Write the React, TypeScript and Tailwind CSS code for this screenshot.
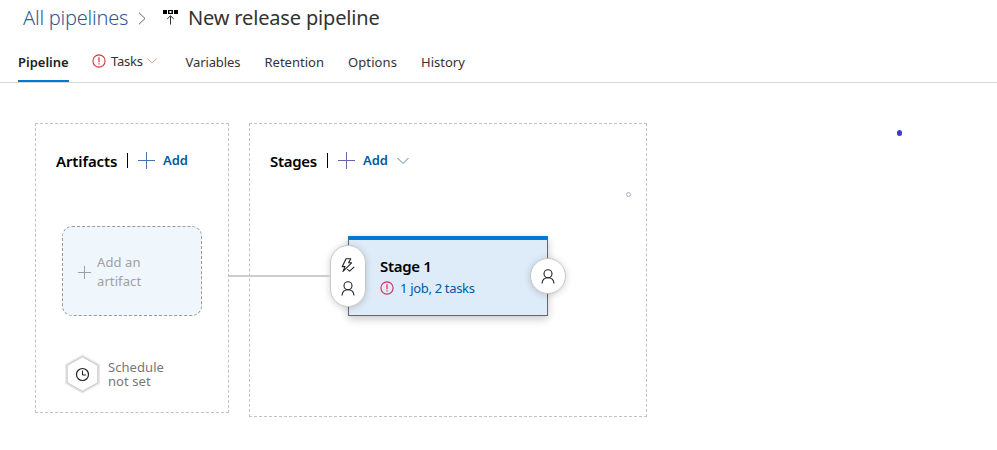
import type { ReactNode } from "react";

function Chevron({ className }: { className: string }) {
  return (
    <svg className={className} width="12" height="8" viewBox="0 0 12 8" fill="none" stroke="currentColor">
      <path d="M.5 1l5.500 5.500L11.500 1" />
    </svg>
  );
}

function Plus({ size, className }: { size: number; className: string }) {
  return (
    <svg className={className} width={size} height={size} viewBox={`0 0 ${size} ${size}`} fill="none" stroke="currentColor" shapeRendering="crispEdges">
      <path d={`M0 ${Math.floor(size / 2) + 0.5}H${size}M${Math.floor(size / 2) + 0.5} 0V${size}`} />
    </svg>
  );
}

function Alert({ className }: { className: string }) {
  return (
    <svg className={className} width="14" height="14" viewBox="0 0 14 14" fill="none" stroke="currentColor">
      <circle cx="7" cy="7" r="6.100" strokeWidth="1.100" />
      <path d="M7 3.300V8.200M7 9.300V10.500" strokeWidth="1.200" />
    </svg>
  );
}

function Person() {
  return (
    <svg width="14" height="15" viewBox="0 0 14 15" fill="none" stroke="#222" strokeWidth="1.100">
      <circle cx="7" cy="4.800" r="4" />
      <path d="M1 14.500C1.300 11 3.700 8.800 7 8.800S12.700 11 13 14.500" />
    </svg>
  );
}

function Bolt() {
  return (
    <svg width="15" height="15" viewBox="0 0 15 15" fill="none" stroke="#222" strokeWidth="1.100" strokeLinejoin="round">
      <path d="M5 .8H9.800L7.600 4.800H10.600L2 13.400L4 8.600H1.300Z" />
      <path d="M6.200 11.200L8.600 13.200L13.300 8.800" />
    </svg>
  );
}

function Tab({ children, className }: { children: ReactNode; className: string }) {
  return <a className={`h-full shrink-0 whitespace-nowrap pt-[12px] leading-5 ${className}`}>{children}</a>;
}

export default function App() {
  return (
    <div className="h-[450px] w-[997px] overflow-hidden bg-white font-['Noto_Sans','Open_Sans',sans-serif] text-[13px] text-[#333]">
      <header className="flex h-10 items-start pl-[23px]">
        <a className="w-[115px] whitespace-nowrap pt-[4px] text-[20px] font-light leading-7 tracking-[-0.22px] text-[#2f5a94]">All pipelines</a>
        <svg className="mt-[12px]" width="8" height="13" viewBox="0 0 8 13" fill="none" stroke="#666">
          <path d="M1 .7L7 6.500L1 12.300" />
        </svg>
        <svg className="ml-[17px] mt-[10px]" width="15" height="15" viewBox="0 0 15 15">
          <path d="M0 0H4V4H0ZM5 0H10V4H5ZM11 0H15V4H11Z" fill="#000" />
          <path d="M6.500 1H8.500V3H6.500Z" fill="#fff" />
          <path d="M7.500 14.500V6M4.200 9L7.500 5.800L10.800 9" fill="none" stroke="#333" />
        </svg>
        <h1 className="ml-[10px] whitespace-nowrap pt-[4px] text-[20px] leading-7 tracking-[-0.16px]">New release pipeline</h1>
      </header>

      <nav className="flex h-[43px] border-b border-[#d6d6d6] pl-[18px]">
        <Tab className="w-[51px] border-b-2 border-[#0078d4] font-semibold text-[#222]">Pipeline</Tab>
        <Tab className="-mt-px ml-[23px] w-[93px]">
          <span className="flex items-center">
            <Alert className="text-[#d13438]" />
            <span className="ml-[5px] w-[32px] tracking-[-0.2px]">Tasks</span>
            <Chevron className="ml-[4px] w-[10px] shrink-0 text-[#b9966a]" />
          </span>
        </Tab>
        <Tab className="w-[79px] pl-[0.500px] tracking-[-0.1px]">Variables</Tab>
        <Tab className="w-[84px] pl-[0.500px]">Retention</Tab>
        <Tab className="w-[73px] tracking-[0.1px]">Options</Tab>
        <Tab className="w-[60px]">History</Tab>
      </nav>

      <main className="relative flex h-[367px] items-start gap-5 pl-[35px] pt-[40px]">
        <section className="h-[290px] w-[194px] border border-dashed border-[#c2c2c2]">
          <div className="flex h-[73px] items-center pl-5 text-[#005a9e]">
            <h2 className="w-[71px] whitespace-nowrap pt-[2px] text-[15px] font-semibold tracking-[-0.12px] text-black">Artifacts</h2>
            <span className="h-[15px] w-px bg-black" />
            <Plus size={17} className="ml-[10px] text-[#4d6fab]" />
            <span className="ml-[8px] font-semibold">Add</span>
          </div>
          <button className="ml-[26px] mt-[29px] flex h-[90px] w-[140px] items-center rounded-[10px] border border-dashed border-[#999] bg-[#eff6fc] pl-[15px] text-left text-[#a0a0a0]">
            <Plus size={13} className="mt-[3px]" />
            <span className="ml-[6px] w-[60px] pt-[2px] leading-[19px] tracking-[0.1px]">Add an artifact</span>
          </button>
          <div className="ml-[28px] mt-[38px] flex items-center text-[#777]">
            <svg width="36" height="40" viewBox="0 0 36 40" fill="none">
              <path d="M18.500 2L34.500 11V29L18.500 38L2.500 29V11Z" fill="#fff" stroke="#ebebeb" strokeWidth="3" />
              <path d="M18.500 2.500L34 11.200V28.800L18.500 37.500L3 28.800V11.200Z" stroke="#c8c8c8" />
              <circle cx="18.500" cy="20.500" r="6" stroke="#222" strokeWidth="1.200" />
              <path d="M18.500 16.500V21H22" stroke="#222" />
            </svg>
            <span className="ml-[8px] w-[62px] leading-[14px] tracking-[0.06px]">Schedule not set</span>
          </div>
        </section>

        <section className="h-[294px] w-[398px] border border-dashed border-[#c2c2c2]">
          <div className="flex h-[73px] items-center pl-5 text-[#005a9e]">
            <h2 className="w-[57px] whitespace-nowrap pt-[2px] text-[15px] font-semibold tracking-[-0.320px] text-black">Stages</h2>
            <span className="h-[15px] w-px bg-black" />
            <Plus size={17} className="ml-[10px] text-[#6666ae]" />
            <span className="ml-[8px] w-[27px] font-semibold">Add</span>
            <Chevron className="ml-[7px] text-[#627f9c]" />
          </div>
          <article className="relative ml-[98px] mt-[39px] h-[80px] w-[200px] border border-t-4 border-[#666] border-t-[#0078d4] bg-[#deecf9] pl-[31px] pt-[16px] shadow-[0_3px_8px_rgba(0,0,0,0.22)]">
            <h3 className="text-[15px] font-semibold leading-5 tracking-[-0.320px] text-black">Stage 1</h3>
            <p className="mt-[2px] flex items-center leading-5 text-[#005a9e]">
              <Alert className="text-[#d92b55]" />
              <span className="ml-[6px] whitespace-nowrap tracking-[-0.320px]">1 job, 2 tasks</span>
            </p>
            <div className="absolute -left-[19px] top-[5px] flex h-[62px] w-[36px] flex-col items-center justify-center gap-[8px] rounded-full border border-[#c8c8c8] bg-white pt-px shadow-[0_1px_7px_rgba(0,0,0,0.18)]">
              <Bolt />
              <Person />
            </div>
            <div className="absolute -right-[19px] top-[18px] flex h-[36px] w-[36px] items-center justify-center rounded-full border border-[#c8c8c8] bg-white shadow-[0_1px_7px_rgba(0,0,0,0.18)]">
              <Person />
            </div>
          </article>
        </section>

        <span className="absolute left-[229px] top-[192px] h-[2px] w-[101px] bg-[#cdcdcd]" />
        <span className="absolute left-[626px] top-[109px] h-[5px] w-[5px] rounded-full border border-[#aaa9cf]" />
        <span className="absolute left-[897px] top-[47px] h-[6px] w-[5px] rounded-full bg-[#3f3fc8]" />
      </main>
    </div>
  );
}
